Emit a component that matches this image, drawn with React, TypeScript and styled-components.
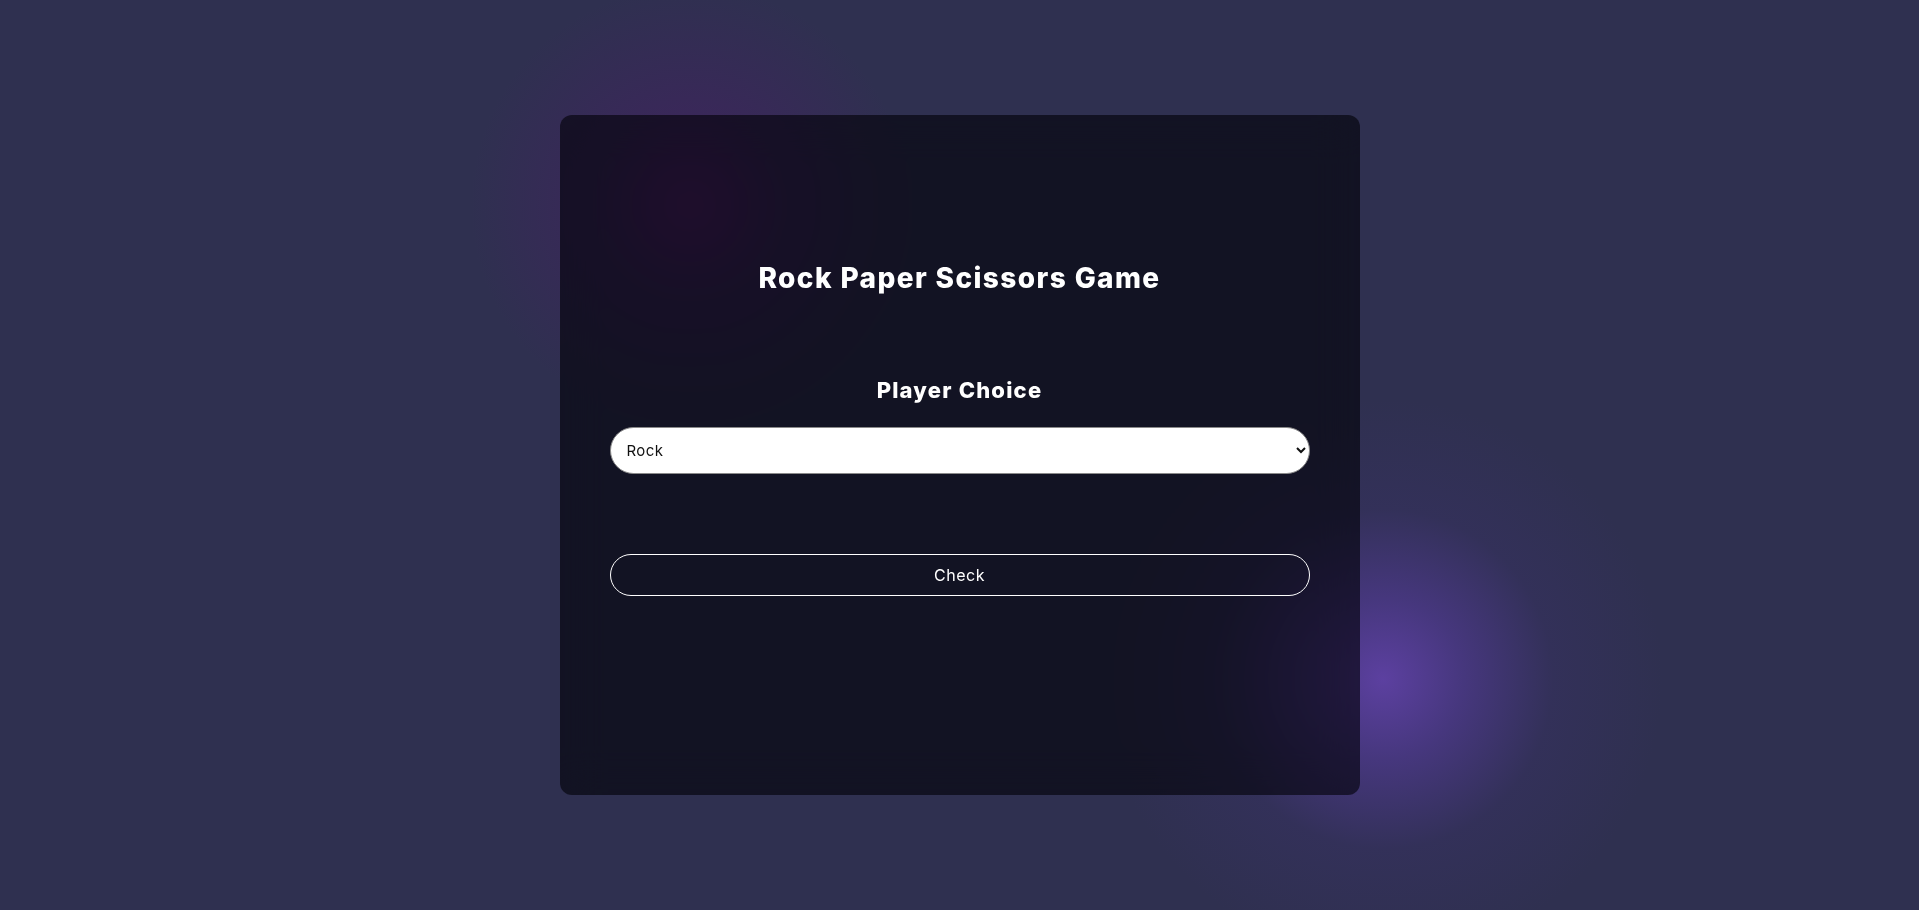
import React from "react";
import styled, { createGlobalStyle } from "styled-components";

const GlobalStyle = createGlobalStyle`
  html, body {
    margin: 0;
    padding: 0;
    height: 100%;
  }
  body {
    font-family: "Inter", "Liberation Sans", sans-serif;
    background-color: #2f3050;
    background-image:
      radial-gradient(circle at 690px 205px, rgba(88, 30, 110, 0.85) 0px, rgba(70, 30, 100, 0.45) 90px, rgba(47, 48, 80, 0) 220px),
      radial-gradient(circle at 1383px 679px, rgba(92, 64, 160, 1) 0px, rgba(80, 58, 145, 0.7) 80px, rgba(60, 50, 110, 0.3) 170px, rgba(47, 48, 80, 0) 280px);
    background-repeat: no-repeat;
  }
`;

const Page = styled.main`
  width: 100%;
  height: 910px;
  display: flex;
  align-items: center;
  justify-content: center;
`;

const Card = styled.section`
  box-sizing: border-box;
  width: 800px;
  height: 680px;
  border-radius: 12px;
  background: rgba(0, 0, 5, 0.6);
  backdrop-filter: blur(20px);
  padding: 146px 50px 0;
  display: flex;
  flex-direction: column;
  align-items: center;
`;

const Title = styled.h1`
  margin: 0;
  font-size: 28px;
  line-height: 34px;
  font-weight: 800;
  color: #ffffff;
  letter-spacing: 1.4px;
`;

const Label = styled.h2`
  margin: 82px 0 0;
  font-size: 22px;
  line-height: 27px;
  font-weight: 800;
  color: #ffffff;
  letter-spacing: 1.2px;
`;

const Select = styled.select`
  box-sizing: border-box;
  margin-top: 23px;
  width: 100%;
  height: 47px;
  border-radius: 24px;
  border: 1px solid #8a8a8a;
  background: #ffffff;
  color: #111111;
  font-family: "Inter", "Liberation Sans", sans-serif;
  font-size: 15px;
  letter-spacing: 0.4px;
  padding: 0 10px 0 12px;
  outline: none;
`;

const Button = styled.button`
  box-sizing: border-box;
  margin-top: 80px;
  width: 100%;
  height: 42px;
  border-radius: 21px;
  border: 1px solid #ffffff;
  background: transparent;
  color: #ffffff;
  font-family: "Inter", "Liberation Sans", sans-serif;
  font-size: 16px;
  letter-spacing: 0.5px;
  cursor: pointer;
`;

export default function App() {
  return (
    <>
      <GlobalStyle />
      <Page>
        <Card>
          <Title>Rock Paper Scissors Game</Title>
          <Label>Player Choice</Label>
          <Select defaultValue="rock">
            <option value="rock">Rock</option>
            <option value="paper">Paper</option>
            <option value="scissors">Scissors</option>
          </Select>
          <Button>Check</Button>
        </Card>
      </Page>
    </>
  );
}
